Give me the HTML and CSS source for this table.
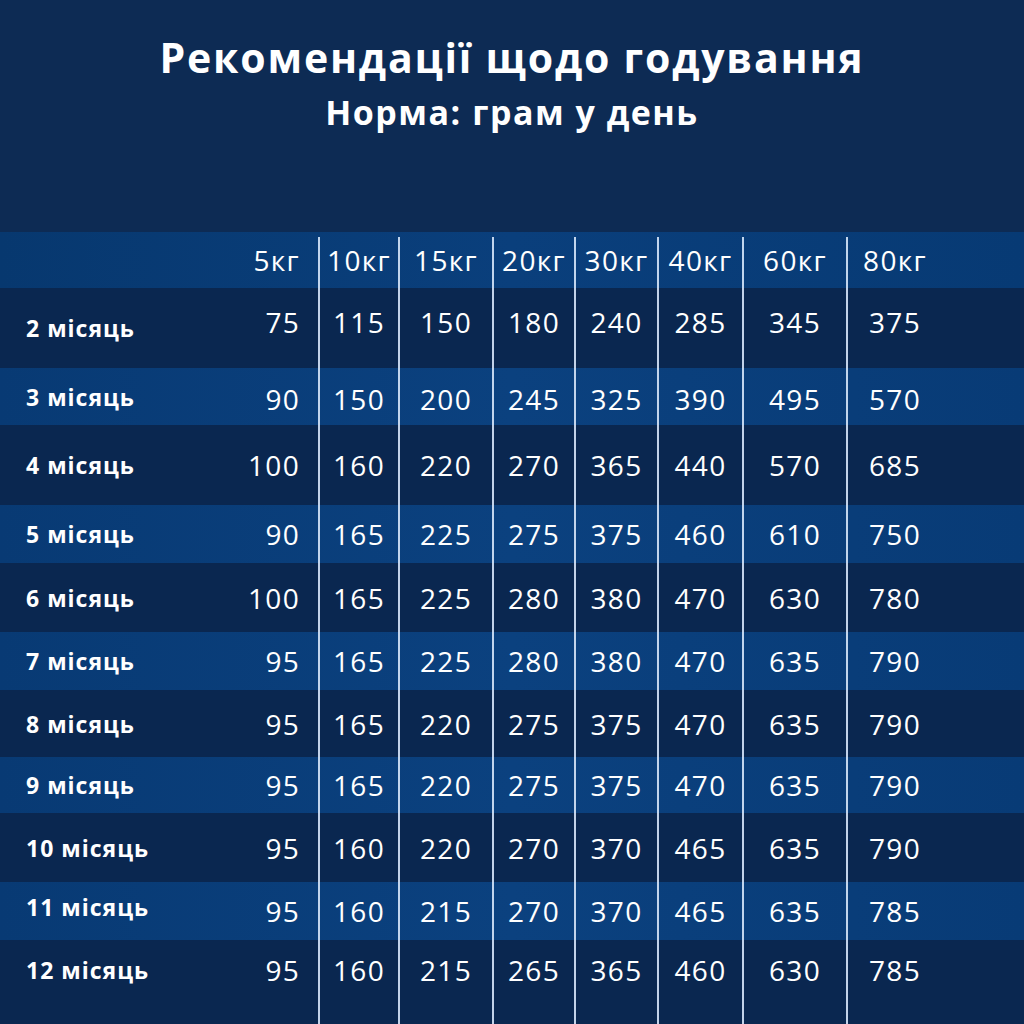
FILE: index.html
```html
<!DOCTYPE html>
<html lang="uk">
<head>
<meta charset="utf-8">
<title>Рекомендації щодо годування</title>
<link rel="stylesheet" href="styles.css">
</head>
<body>
<div class="page">
  <header class="titles">
    <h1 class="title">Рекомендації щодо годування</h1>
    <h2 class="subtitle">Норма: грам у день</h2>
  </header>
  <div class="table">
    <div class="row head">
      <div class="cell label"></div>
      <div class="cell first">5кг</div>
      <div class="cell">10кг</div>
      <div class="cell">15кг</div>
      <div class="cell">20кг</div>
      <div class="cell">30кг</div>
      <div class="cell">40кг</div>
      <div class="cell">60кг</div>
      <div class="cell">80кг</div>
    </div>
    <div class="row dark r2">
      <div class="cell label">2 місяць</div>
      <div class="cell first">75</div><div class="cell">115</div><div class="cell">150</div><div class="cell">180</div><div class="cell">240</div><div class="cell">285</div><div class="cell">345</div><div class="cell">375</div>
    </div>
    <div class="row blue r3">
      <div class="cell label">3 місяць</div>
      <div class="cell first">90</div><div class="cell">150</div><div class="cell">200</div><div class="cell">245</div><div class="cell">325</div><div class="cell">390</div><div class="cell">495</div><div class="cell">570</div>
    </div>
    <div class="row dark r4">
      <div class="cell label">4 місяць</div>
      <div class="cell first">100</div><div class="cell">160</div><div class="cell">220</div><div class="cell">270</div><div class="cell">365</div><div class="cell">440</div><div class="cell">570</div><div class="cell">685</div>
    </div>
    <div class="row blue r5">
      <div class="cell label">5 місяць</div>
      <div class="cell first">90</div><div class="cell">165</div><div class="cell">225</div><div class="cell">275</div><div class="cell">375</div><div class="cell">460</div><div class="cell">610</div><div class="cell">750</div>
    </div>
    <div class="row dark r6">
      <div class="cell label">6 місяць</div>
      <div class="cell first">100</div><div class="cell">165</div><div class="cell">225</div><div class="cell">280</div><div class="cell">380</div><div class="cell">470</div><div class="cell">630</div><div class="cell">780</div>
    </div>
    <div class="row blue r7">
      <div class="cell label">7 місяць</div>
      <div class="cell first">95</div><div class="cell">165</div><div class="cell">225</div><div class="cell">280</div><div class="cell">380</div><div class="cell">470</div><div class="cell">635</div><div class="cell">790</div>
    </div>
    <div class="row dark r8">
      <div class="cell label">8 місяць</div>
      <div class="cell first">95</div><div class="cell">165</div><div class="cell">220</div><div class="cell">275</div><div class="cell">375</div><div class="cell">470</div><div class="cell">635</div><div class="cell">790</div>
    </div>
    <div class="row blue r9">
      <div class="cell label">9 місяць</div>
      <div class="cell first">95</div><div class="cell">165</div><div class="cell">220</div><div class="cell">275</div><div class="cell">375</div><div class="cell">470</div><div class="cell">635</div><div class="cell">790</div>
    </div>
    <div class="row dark r10">
      <div class="cell label">10 місяць</div>
      <div class="cell first">95</div><div class="cell">160</div><div class="cell">220</div><div class="cell">270</div><div class="cell">370</div><div class="cell">465</div><div class="cell">635</div><div class="cell">790</div>
    </div>
    <div class="row blue r11">
      <div class="cell label">11 місяць</div>
      <div class="cell first">95</div><div class="cell">160</div><div class="cell">215</div><div class="cell">270</div><div class="cell">370</div><div class="cell">465</div><div class="cell">635</div><div class="cell">785</div>
    </div>
    <div class="row dark r12">
      <div class="cell label">12 місяць</div>
      <div class="cell first">95</div><div class="cell">160</div><div class="cell">215</div><div class="cell">265</div><div class="cell">365</div><div class="cell">460</div><div class="cell">630</div><div class="cell">785</div>
    </div>
  </div>
</div>
</body>
</html>
```
FILE: styles.css
```css
* { box-sizing: border-box; }
html, body { margin: 0; padding: 0; }
body {
  background: #0d2b54;
  font-family: "Open Sans", "Noto Sans", sans-serif;
  color: #ffffff;
}
.page {
  width: 1024px;
  height: 1024px;
  display: flex;
  flex-direction: column;
  overflow: hidden;
}
.titles {
  height: 232px;
  display: flex;
  flex-direction: column;
  align-items: center;
  padding-top: 30px;
}
.title {
  margin: 0;
  font-size: 41px;
  font-weight: 700;
  line-height: 54px;
  letter-spacing: 1.8px;
}
.subtitle {
  margin: 6px 0 0 0;
  font-size: 34px;
  font-weight: 700;
  line-height: 44px;
  letter-spacing: 1.5px;
}
.table {
  display: flex;
  flex-direction: column;
}
.row {
  display: grid;
  grid-template-columns: 240px 78px 80px 94px 82px 83px 85px 104px 96px;
  align-items: stretch;
}
.cell {
  display: flex;
  align-items: center;
  justify-content: center;
  font-size: 28px;
  font-weight: 500;
  letter-spacing: 1.3px;
  border-left: 2px solid rgba(214, 230, 250, 0.9);
}
.cell.label,
.cell.first { border-left: none; }
.cell.label {
  justify-content: flex-start;
  padding-left: 26px;
  font-size: 23px;
  font-weight: 700;
  letter-spacing: 1px;
}
.cell.first {
  justify-content: flex-end;
  padding-right: 18px;
}
.head {
  height: 56px;
  background: linear-gradient(90deg, #07386f 0%, #0a3f7c 50%, #073a74 100%);
}
.head .cell { margin-top: 5px; padding-bottom: 5px; }
.dark { background: #0a2750; }
.blue { background: linear-gradient(90deg, #083a74 0%, #0b417f 50%, #083b76 100%); }
.r2 { height: 80px; }
.r2 .cell:not(.label) { padding-bottom: 12px; }
.r3 { height: 57px; }
.r3 .cell:not(.label) { padding-top: 5px; }
.r4 { height: 80px; }
.r5 { height: 58px; }
.r6 { height: 69px; }
.r7 { height: 58px; }
.r8 { height: 67px; }
.r9 { height: 56px; }
.r10 { height: 69px; }
.r11 { height: 58px; }
.r11 .cell.label { padding-bottom: 8px; }
.r12 { height: 84px; }
.r12 .cell { padding-bottom: 24px; }
```
